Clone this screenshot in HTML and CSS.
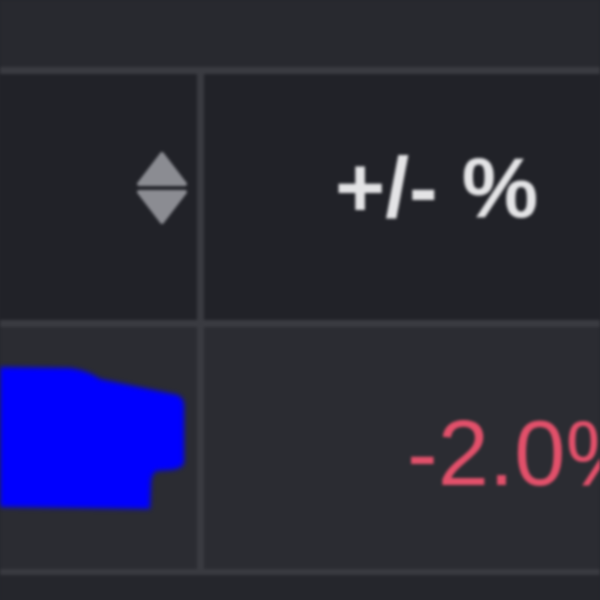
FILE: index.html
```html
<!DOCTYPE html>
<html lang="en">
<head>
    <meta charset="UTF-8">
    <meta name="viewport" content="width=device-width, initial-scale=1.0">
    <title>Change Table</title>
    <link rel="stylesheet" href="styles.css">
</head>
<body>
    <div class="table">
        <div class="toolbar"></div>

        <div class="row head">
            <div class="cell name-col">
                <svg class="sort-icon" width="52" height="72" viewBox="0 0 52 72">
                    <path d="M26 2 L49 32 L3 32 Z" />
                    <path d="M3 40 L49 40 L26 70 Z" />
                </svg>
            </div>
            <div class="cell pct-col">
                <span class="head-label">+/- %</span>
            </div>
        </div>

        <div class="row body-row">
            <div class="cell name-col">
                <svg class="name-blob" width="190" height="150" viewBox="0 0 190 150">
                    <path d="M0 2 L70 3 Q90 6 100 14 L178 30 Q184 34 184 40 L184 98 Q182 104 170 105 L156 106 Q151 110 151 118 L150 144 L0 142 Z" />
                </svg>
            </div>
            <div class="cell pct-col">
                <span class="change negative">-2.0%</span>
            </div>
        </div>

        <div class="footer-strip"></div>
    </div>
</body>
</html>
```

FILE: styles.css
```css
* {
    box-sizing: border-box;
    margin: 0;
    padding: 0;
}

body {
    font-family: 'Liberation Sans', Arial, sans-serif;
    background: #25262c;
    width: 600px;
    height: 600px;
    overflow: hidden;
}

.table {
    display: flex;
    flex-direction: column;
    filter: blur(1.4px);
}

.toolbar {
    height: 67px;
    background: #28292f;
}

.row {
    display: flex;
    border-top: 7px solid #3a3b41;
}

.row.head {
    height: 253px;
    background: #212228;
}

.row.body-row {
    height: 255px;
    background: #2b2c32;
    border-bottom: 6px solid #393a40;
}

.cell {
    display: flex;
    align-items: center;
}

.name-col {
    width: 204px;
    border-right: 7px solid #393a40;
}

.head .name-col {
    justify-content: flex-end;
    padding-right: 9px;
    padding-bottom: 18px;
}

.sort-icon path {
    fill: #8b8c92;
    stroke: #8b8c92;
    stroke-width: 4;
    stroke-linejoin: round;
}

.pct-col {
    flex: 1;
    white-space: nowrap;
    overflow: hidden;
}

.head .pct-col {
    padding-left: 131px;
    padding-bottom: 20px;
}

.head-label {
    font-size: 86px;
    font-weight: bold;
    color: #e4e4e6;
}

.body-row .name-col {
    align-items: flex-start;
    padding-top: 38px;
}

.name-blob {
    filter: blur(2px);
}

.name-blob path {
    fill: #0000ff;
}

.body-row .pct-col {
    padding-left: 203px;
    padding-top: 10px;
}

.change {
    font-size: 92px;
}

.negative {
    color: #e2506a;
}

.footer-strip {
    height: 30px;
    background: #25262c;
}
```
